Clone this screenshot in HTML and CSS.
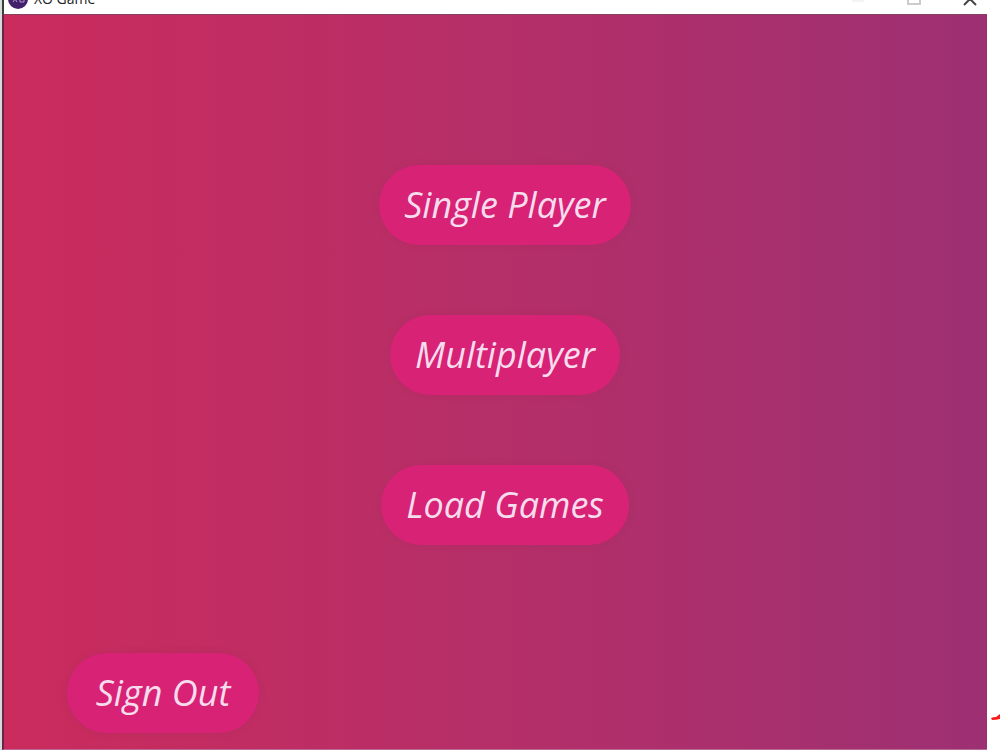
FILE: index.html
```html
<!DOCTYPE html>
<html lang="en">
<head>
<meta charset="utf-8">
<title>XO Game</title>
<link rel="stylesheet" href="styles.css">
</head>
<body>
<div class="window">
  <header class="titlebar">
    <svg class="logo" viewBox="0 0 20 20" aria-hidden="true">
      <circle cx="10" cy="10" r="10" fill="#43206b"/>
      <path d="M5 7l4 6M9 7l-4 6M12 7h4v6h-4zM5 10h11" fill="none" stroke="#b79bd0" stroke-width="1"/>
    </svg>
    <span class="title">XO Game</span>
    <div class="controls">
      <button class="control faint" aria-label="Minimize"><svg viewBox="0 0 14 14"><path d="M1 9h12"/></svg></button>
      <button class="control pale" aria-label="Maximize"><svg viewBox="0 0 14 14"><path d="M1 1h12v11H1z"/></svg></button>
      <button class="control" aria-label="Close"><svg viewBox="0 0 14 14"><path d="M1 1l12 12M13 1L1 13"/></svg></button>
    </div>
  </header>
  <main class="menu">
    <nav class="choices">
      <button class="pill">Single Player</button>
      <button class="pill">Multiplayer</button>
      <button class="pill">Load Games</button>
    </nav>
    <button class="pill sign-out">Sign Out</button>
  </main>
</div>
<aside class="margin">
  <svg class="mark" viewBox="0 0 9 8" aria-hidden="true"><path d="M0 4Q2 3 5 3L9 0V5Q5 6 1 6z" fill="#ff1a1a"/></svg>
</aside>
</body>
</html>
```

FILE: styles.css
```css
* { box-sizing: border-box; }

body {
  margin: 0;
  height: 100vh;
  display: flex;
  overflow: hidden;
  background: #fff;
  font-family: "Open Sans", "Noto Sans", sans-serif;
}

.window {
  flex: 1;
  margin-top: -16px;
  display: flex;
  flex-direction: column;
  border-left: 2px solid #d8dcd8;
}

.titlebar {
  height: 30px;
  flex: none;
  display: flex;
  align-items: center;
  gap: 6px;
  padding: 0 10px 0 4px;
  border-left: 2px solid #34423c;
  background: #fff;
}

.logo { width: 20px; height: 20px; }

.title { font-size: 14px; line-height: 20px; color: #222; }

.controls {
  margin-left: auto;
  display: flex;
  gap: 42px;
}

.control {
  width: 14px;
  height: 14px;
  padding: 0;
  border: 0;
  background: none;
  color: #444;
}

.control svg {
  display: block;
  fill: none;
  stroke: currentColor;
  stroke-width: 2;
}

.pale { color: #ccc; }
.faint { color: #f4f4f4; }

.menu {
  flex: 1;
  display: flex;
  flex-direction: column;
  justify-content: space-between;
  padding: 150px 0 16px 63px;
  border-left: 2px solid #63284c;
  border-top: 1px solid #87405f;
  border-bottom: 1px solid #b76a94;
  background: linear-gradient(90deg, #cb2b5d, #b52f68 50%, #9d3073);
}

.choices {
  display: flex;
  flex-direction: column;
  align-items: center;
  gap: 70px;
  padding-right: 44px;
}

.pill {
  height: 80px;
  min-width: 192px;
  padding: 0 25px;
  border: 0;
  border-radius: 40px;
  background: #d82276;
  box-shadow: 0 0 6px rgba(165, 45, 95, 0.4);
  color: #f6dcec;
  font: italic 36px/48px "Open Sans", "Noto Sans", sans-serif;
}

.sign-out {
  align-self: flex-start;
}

.margin {
  width: 13px;
  display: flex;
  align-items: flex-end;
  justify-content: flex-end;
  padding-bottom: 28px;
}

.mark { width: 9px; height: 8px; }
```
